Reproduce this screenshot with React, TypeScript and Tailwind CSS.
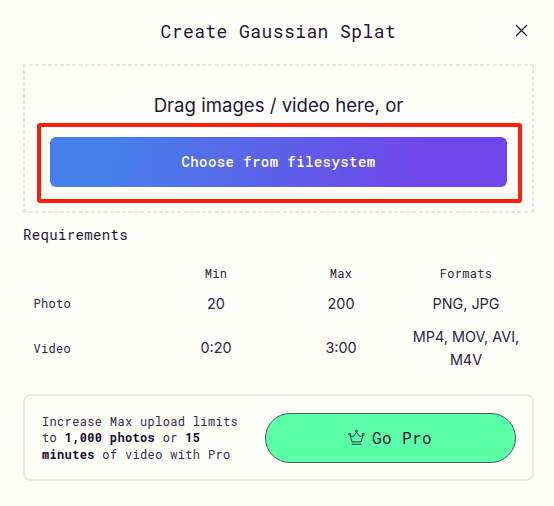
import type { ReactNode } from 'react'

type Requirement = {
  label: string
  min: string
  max: string
  formats: string
}

const requirements: Requirement[] = [
  { label: 'Photo', min: '20', max: '200', formats: 'PNG, JPG' },
  { label: 'Video', min: '0:20', max: '3:00', formats: 'MP4, MOV, AVI, M4V' },
]

function CloseIcon() {
  return (
    <svg width="13" height="13" viewBox="0 0 13 13" fill="none" stroke="currentColor" strokeWidth="1.2">
      <path d="M1 1l11 11M12 1L1 12" />
    </svg>
  )
}

function CrownIcon() {
  return (
    <svg width="17" height="17" viewBox="0 0 18 17" fill="none" stroke="currentColor" strokeWidth="0.9">
      <path d="M4.2 13.1L2.2 6.2Q4.6 8.4 6.2 6.8L9 2.8l2.8 4Q13.4 8.4 15.8 6.2l-2 6.9z" strokeLinejoin="round" />
      <circle cx="1.8" cy="5.1" r="1" />
      <circle cx="9" cy="1.8" r="1" />
      <circle cx="16.2" cy="5.1" r="1" />
      <path d="M3.8 15.6h10.4" />
    </svg>
  )
}

function HeadCell({ children }: { children?: ReactNode }) {
  return <th className="pr-px pb-[4px] text-center text-[12px] font-normal">{children}</th>
}

function ValueCell({ children }: { children: ReactNode }) {
  return (
    <td className="pr-[9px] pb-[3px] pl-2 text-center font-['Inter',sans-serif] text-[14.4px] leading-[23px] tracking-normal">
      {children}
    </td>
  )
}

// four gradient strips, since a native dashed border spaces its dashes wider
function DropZone() {
  return (
    <div className="mt-[17px] flex h-[149px] flex-col items-center bg-[repeating-linear-gradient(90deg,#e9e8e0_0_4px,transparent_4px_6.18px),repeating-linear-gradient(90deg,#e9e8e0_0_4px,transparent_4px_6.18px),repeating-linear-gradient(180deg,#e9e8e0_0_4px,transparent_4px_6.04px),repeating-linear-gradient(180deg,#e9e8e0_0_4px,transparent_4px_6.04px)] bg-[length:100%_2px,100%_2px,2px_100%,2px_100%] bg-[position:left_top,left_bottom,left_top,right_top] bg-no-repeat pt-[28px]">
      <p className="font-['Inter',sans-serif] text-[18.6px] leading-[26px] tracking-normal">
        Drag images / video here, or
      </p>
      <div className="mt-[5px] ml-[2px] h-[80px] w-[485px] rounded-[3px] border-4 border-[#ff1d0d] px-[9px] py-[10px]">
        <button className="h-[50px] w-[457px] rounded-md bg-linear-[100deg,#467eea_15%,#5d60e9_50%,#7045ea_82%] pb-px text-[14px] font-medium tracking-[0.42px] text-white">
          Choose from filesystem
        </button>
      </div>
    </div>
  )
}

function RequirementsTable() {
  return (
    <table className="mt-[19px] ml-[6px] w-[500px] table-fixed border-collapse text-[#2b2444]">
      <thead>
        <tr className="h-[22px]">
          <HeadCell />
          <HeadCell>Min</HeadCell>
          <HeadCell>Max</HeadCell>
          <HeadCell>Formats</HeadCell>
        </tr>
      </thead>
      <tbody>
        {requirements.map((row) => (
          <tr key={row.label} className="h-[37px] last:h-[52px]">
            <th className="pb-[3px] pl-[4.5px] text-left text-[12px] font-normal">{row.label}</th>
            <ValueCell>{row.min}</ValueCell>
            <ValueCell>{row.max}</ValueCell>
            <ValueCell>{row.formats}</ValueCell>
          </tr>
        ))}
      </tbody>
    </table>
  )
}

function ProBanner() {
  return (
    <div className="mt-[19px] flex h-[87px] items-center justify-between rounded-[8px] border-2 border-[#ebeae1] pr-[16.5px] pl-[17px]">
      <p className="w-[212px] text-[12px] leading-[16.5px] tracking-[0.34px] text-[#332c4a]">
        Increase Max upload limits to <b className="text-[#120a2e]">1,000 photos</b> or{' '}
        <b className="text-[#120a2e]">15 minutes</b> of video with Pro
      </p>
      <button className="flex h-[50px] w-[251px] items-center justify-center gap-[7px] rounded-full border border-[#3f6554] bg-[#5bffa7] text-[16px] tracking-[0.4px]">
        <CrownIcon />
        Go Pro
      </button>
    </div>
  )
}

export default function App() {
  return (
    <main className="h-[506px] w-[554px] bg-[#fffffa] pr-[20px] pl-[23px] font-['Roboto_Mono','Liberation_Mono',monospace] tracking-[0.3px] text-[#1e1638]">
      <header className="flex h-[47px] items-end justify-between pl-[137.5px] pr-[6px]">
        <h1 className="pb-px text-[18px] leading-[30px] tracking-[0.42px]">Create Gaussian Splat</h1>
        <button aria-label="Close" className="pb-[10px]">
          <CloseIcon />
        </button>
      </header>
      <DropZone />
      <h2 className="mt-[12px] text-[14px] leading-[20px] tracking-[0.35px]">Requirements</h2>
      <RequirementsTable />
      <ProBanner />
    </main>
  )
}
